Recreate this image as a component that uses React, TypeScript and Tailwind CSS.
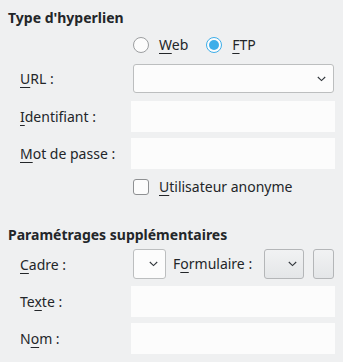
import React from "react"

function Chevron() {
  return (
    <svg width="9" height="6" viewBox="0 0 9 6" className="shrink-0">
      <path d="M0.8 1 L4.5 4.6 L8.2 1" fill="none" stroke="#31363b" strokeWidth="1.1" />
    </svg>
  )
}

function M({ children }: { children: React.ReactNode }) {
  return <span className="underline decoration-1 underline-offset-[3px]">{children}</span>
}

function Label({ children }: { children: React.ReactNode }) {
  return <div className="w-[131px] shrink-0 pl-5">{children}</div>
}

function TextInput() {
  return <div className="h-[31px] w-[204px] bg-[#fcfcfc]" />
}

export default function App() {
  return (
    <div
      className="h-[362px] w-[343px] overflow-hidden bg-[#eff0f1] pt-2 text-[14px] text-[#232629]"
      style={{ fontFamily: '"Noto Sans", "DejaVu Sans", sans-serif' }}
    >
      {/* Type d'hyperlien */}
      <div className="h-5 pl-2 font-bold leading-5">Type d'hyperlien</div>

      <div className="mt-[7px] flex h-5 items-center pl-[133px]">
        <span className="h-4 w-4 rounded-full border border-[#9c9ea0] bg-[#fcfcfc]" />
        <span className="ml-[10px] leading-5">
          <M>W</M>eb
        </span>
        <span className="ml-[18px] flex h-4 w-4 items-center justify-center rounded-full border border-[#3daee9] bg-[#fcfcfc]">
          <span className="h-[10px] w-[10px] rounded-full bg-[#3daee9]" />
        </span>
        <span className="ml-[10px] leading-5">
          <M>F</M>TP
        </span>
      </div>

      <div className="mt-[9px] flex h-[29px] items-center">
        <Label>
          <M>U</M>RL :
        </Label>
        <div className="ml-[1.5px] flex h-[29px] w-[201px] items-center justify-end rounded-[3px] border border-[#bcbebf] bg-[#fcfcfc] pr-[7px]">
          <Chevron />
        </div>
      </div>

      <div className="mt-2 flex h-[31px] items-center">
        <Label>
          <M>I</M>dentifiant :
        </Label>
        <TextInput />
      </div>

      <div className="mt-[6px] flex h-[31px] items-center">
        <Label>
          <M>M</M>ot de passe :
        </Label>
        <TextInput />
      </div>

      <div className="mt-2 flex h-5 items-center pl-[133px]">
        <span className="h-4 w-4 rounded-[3px] border border-[#8e9092] bg-[#fcfcfc]" />
        <span className="ml-[10px] leading-5">
          <M>U</M>tilisateur anonyme
        </span>
      </div>

      {/* Paramétrages supplémentaires */}
      <div className="mt-[28px] h-5 pl-2 font-bold leading-5">Paramétrages supplémentaires</div>

      <div className="mt-1 flex h-[30px] items-center">
        <Label>
          <M>C</M>adre :
        </Label>
        <div className="ml-[1.5px] flex h-[30px] w-[33px] items-center justify-end rounded-[3px] border border-[#bcbebf] bg-[#fcfcfc] pr-[7px]">
          <Chevron />
        </div>
        <span className="ml-[7.5px] leading-5">
          F<M>o</M>rmulaire :
        </span>
        <div className="ml-auto flex h-[30px] w-[40px] items-center justify-end rounded-[3px] border border-[#b4b6b8] bg-gradient-to-b from-[#f1f2f3] to-[#e4e6e8] pr-[6px]">
          <Chevron />
        </div>
        <div className="mr-[9.5px] ml-[9px] h-[30px] w-[21px] rounded-[3px] border border-[#b4b6b8] bg-gradient-to-b from-[#f1f2f3] to-[#e4e6e8]" />
      </div>

      <div className="mt-[7px] flex h-[31px] items-center">
        <Label>
          Te<M>x</M>te :
        </Label>
        <TextInput />
      </div>

      <div className="mt-[6px] flex h-[31px] items-center">
        <Label>
          N<M>o</M>m :
        </Label>
        <TextInput />
      </div>
    </div>
  )
}
